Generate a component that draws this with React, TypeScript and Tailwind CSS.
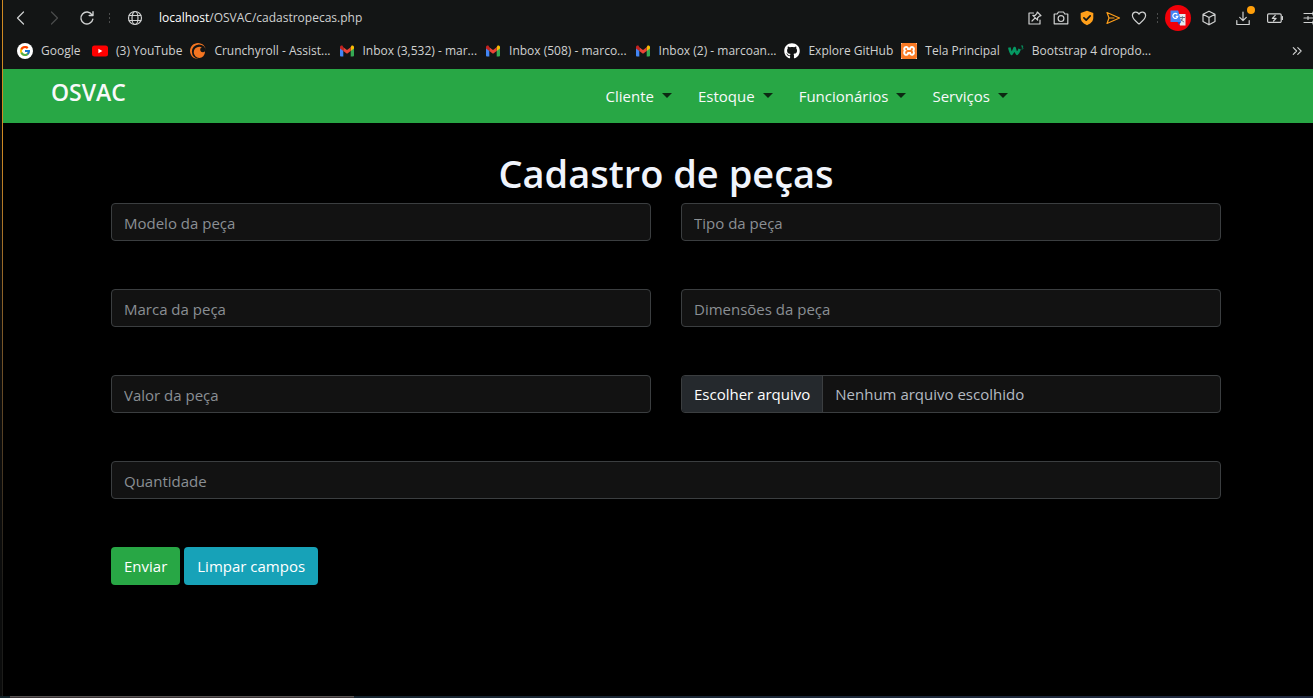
import type { ReactNode } from "react";
import { FcGoogle } from "react-icons/fc";
import { FaGithub } from "react-icons/fa";
import { SiCrunchyroll, SiXampp } from "react-icons/si";

const stroke = {
  fill: "none",
  stroke: "currentColor",
  strokeWidth: 1.2,
  strokeLinecap: "round" as const,
  strokeLinejoin: "round" as const,
};

function Icon({ children, className = "size-4" }: { children: ReactNode; className?: string }) {
  return (
    <svg viewBox="0 0 16 16" className={className} aria-hidden="true" {...stroke}>
      {children}
    </svg>
  );
}

function Gmail() {
  return (
    <svg viewBox="0 0 16 16" className="size-4" aria-hidden="true">
      <path d="M1 4v8.600c0 .5.4.9.9.9H4.300V7z" fill="#4285f4" />
      <path d="M15 4v8.600c0 .5-.4.9-.9.9h-2.400V7z" fill="#34a853" />
      <path d="M11.700 4.200V8L15 5.500V4c0-1.400-1.600-2-2.600-1.300z" fill="#fbbc04" />
      <path d="M4.300 8V4.200L8 7l3.700-2.800V8L8 10.800z" fill="#ea4335" />
      <path d="M1 4v1.500L4.300 8V4.200l-.7-1.500C2.600 2 1 2.600 1 4z" fill="#c5221f" />
    </svg>
  );
}

function YouTube() {
  return (
    <svg viewBox="0 0 16 16" className="size-4" aria-hidden="true">
      <rect x="0" y="2.500" width="16" height="11" rx="2.500" fill="#f00" />
      <path d="M6.400 5.700v4.600L10.400 8z" fill="#fff" />
    </svg>
  );
}

function W3() {
  return (
    <svg viewBox="0 0 16 16" className="size-4" aria-hidden="true" fill="none" stroke="#059862" strokeLinejoin="round">
      <path d="M1.300 4.500c.6 2.800 1.300 5.200 2.300 6.300 1.300-1.300 2.300-3.600 3-5.800.6 2.700 1.300 4.800 2.400 5.800 1.200-1.200 2-2.800 2.700-4.800" strokeWidth="2.600" />
      <path d="M13 3h2l-1 1.300c1.500 0 1.400 2-.4 1.800" strokeWidth="0.900" />
    </svg>
  );
}

const bookmarks: { label: string; icon: ReactNode }[] = [
  {
    label: "Google",
    icon: (
      <span className="flex size-4 items-center justify-center rounded-full bg-white">
        <FcGoogle className="size-3" />
      </span>
    ),
  },
  { label: "(3) YouTube", icon: <YouTube /> },
  { label: "Crunchyroll - Assist...", icon: <SiCrunchyroll className="size-4 text-[#f47521]" /> },
  { label: "Inbox (3,532) - mar...", icon: <Gmail /> },
  { label: "Inbox (508) - marco...", icon: <Gmail /> },
  { label: "Inbox (2) - marcoan...", icon: <Gmail /> },
  { label: "Explore GitHub", icon: <FaGithub className="size-4 text-white" /> },
  {
    label: "Tela Principal",
    icon: (
      <span className="flex size-4 items-center justify-center bg-white">
        <SiXampp className="size-4 text-[#fb7a24]" />
      </span>
    ),
  },
  { label: "Bootstrap 4 dropdo...", icon: <W3 /> },
];

function ToolButton({ label, className = "", children }: { label: string; className?: string; children: ReactNode }) {
  return (
    <button type="button" aria-label={label} className={`flex shrink-0 items-center justify-center ${className}`}>
      {children}
    </button>
  );
}

function Dots() {
  return (
    <svg viewBox="0 0 2 12" className="h-3 w-0.5 shrink-0" fill="#4b4c4c" aria-hidden="true">
      <rect y="1" width="1" height="2" />
      <rect y="5" width="1" height="2" />
      <rect y="9" width="1" height="2" />
    </svg>
  );
}

function BrowserBar() {
  return (
    <header className="bg-[#131515] text-[#d0d1d1]">
      <div className="flex h-9 items-center justify-between overflow-hidden pl-2.5">
        <div className="flex items-center">
          <div className="flex items-center gap-[17px]">
            <ToolButton label="Voltar">
              <Icon><path d="M10.500 2L4.500 8l6 6" /></Icon>
            </ToolButton>
            <ToolButton label="Avançar" className="text-[#4b4c4c]">
              <Icon><path d="M5.500 2l6 6-6 6" /></Icon>
            </ToolButton>
            <ToolButton label="Recarregar">
              <Icon>
                <path d="M13.800 9.300A6 6 0 1 1 13 4.800M14 1.800v3.700h-3.800" strokeWidth="1.400" />
              </Icon>
            </ToolButton>
          </div>
          <div className="flex items-center gap-4 pl-3.5">
            <Dots />
            <ToolButton label="Informações do site">
              <Icon>
                <circle cx="8" cy="8" r="6.500" />
                <ellipse cx="8" cy="8" rx="3" ry="6.500" />
                <path d="M2.200 5.500h11.600M2.200 10.500h11.600" />
              </Icon>
            </ToolButton>
            <span className="text-xs">
              <span className="text-white">localhost</span>/OSVAC/cadastropecas.php
            </span>
          </div>
        </div>
        <div className="flex shrink-0 items-center">
          <div className="flex items-center gap-2.5">
            <ToolButton label="Fixar">
              <Icon>
                <path d="M6.500 3H2v11h11V10" />
                <path d="M10.300 2l3.700 3.700-1.700.5-1.800 1.800.1 2.200-4.800-4.800 2.200.1 1.800-1.800zM8.200 7.800L5 11" />
              </Icon>
            </ToolButton>
            <ToolButton label="Captura de tela">
              <Icon>
                <path d="M1.200 4h3l1.300-2h5l1.300 2h3v9.800H1.200z" />
                <circle cx="8" cy="8.600" r="2.900" />
              </Icon>
            </ToolButton>
            <ToolButton label="Proteção">
              <Icon>
                <path d="M8 .8l6.300 2.200v4.800c0 3.800-3 6-6.300 7.400C4.700 13.800 1.700 11.600 1.700 7.800V3z" fill="#ff9f1a" stroke="none" />
                <path d="M4.900 7.800l2.300 2.300 4-4.300" stroke="#131515" strokeWidth="1.700" />
              </Icon>
            </ToolButton>
            <ToolButton label="Meu fluxo" className="text-[#ff9f1a]">
              <Icon>
                <path d="M2 2.500L14.500 8 2 13.500 4 8zM4 8h5" />
              </Icon>
            </ToolButton>
            <ToolButton label="Favoritar">
              <Icon>
                <path d="M8 14C5 11.500 1.400 9 1.400 5.500c0-3.800 5-4.700 6.600-1.300 1.600-3.400 6.600-2.500 6.600 1.300C14.600 9 11 11.500 8 14z" />
              </Icon>
            </ToolButton>
            <Dots />
          </div>
          <ToolButton label="Tradutor" className="ml-1.5 size-6.5 rounded-full bg-[#f00008]">
            <svg viewBox="0 0 16 16" className="size-4" aria-hidden="true">
              <path d="M6 4h9.500v11.500H10z" fill="#e8eaed" />
              <path d="M10 7.500h5M12.400 6.300v1.200c0 2-1 3.500-2.200 4.300M10.800 9c.8 1.600 2 2.400 3.300 3" fill="none" stroke="#5f7080" />
              <path d="M.5.500h7.700l3 11.500H.5z" fill="#4285f4" />
              <path d="M7.300 4.300A2.500 2.500 0 1 0 7.800 6.400H5.700" fill="none" stroke="#fff" strokeWidth="1.200" />
              <path d="M7.500 12H11l-2 3z" fill="#1a56c4" />
            </svg>
          </ToolButton>
          <ToolButton label="Extensões" className="ml-2.5">
            <Icon>
              <path d="M8 1.200l6 3.100v7.200l-6 3.300-6-3.300V4.300zM2 4.300l6 3.200 6-3.200M8 7.500v7.300" />
            </Icon>
          </ToolButton>
          <ToolButton label="Downloads" className="relative ml-4.5">
            <Icon>
              <path d="M8 2v8.500M4.700 7.400L8 10.700l3.300-3.300M1.800 10.500v4h12.400v-4" />
            </Icon>
            <span className="absolute -right-1 -top-1 size-2 rounded-full bg-[#ff9f0a]" />
          </ToolButton>
          <ToolButton label="Economia de bateria" className="ml-4">
            <Icon>
              <path d="M1.700 3.800h11.300a1.200 1.200 0 0 1 1.200 1.200v6.200a1.200 1.200 0 0 1-1.200 1.200H1.700A1.200 1.200 0 0 1 .6 11.200V5a1.200 1.200 0 0 1 1.100-1.200zM15.500 6.500v3" />
              <path d="M8.200 5.300L5.300 8.400h3.800L6.500 11" />
            </Icon>
          </ToolButton>
          <ToolButton label="Configuração" className="-mr-1.5 ml-5">
            <Icon>
              <path d="M1 3.500h14M1 8h14M1 12.500h14M10 2v3M5 6.500v3M10 11v3" />
            </Icon>
          </ToolButton>
        </div>
      </div>
      <nav aria-label="Favoritos" className="flex h-[33px] items-center pb-1 pl-3.5 pr-2.5">
        <ul className="flex min-w-0 flex-1 items-center gap-2 overflow-hidden">
          {bookmarks.map((b) => (
            <li key={b.label} className="min-w-[67px] shrink-0">
              <a href="#" className="flex items-center gap-2 text-xs whitespace-nowrap">
                {b.icon}
                {b.label}
              </a>
            </li>
          ))}
        </ul>
        <ToolButton label="Mais favoritos">
          <Icon className="size-3">
            <path d="M3 3.500L7.500 8 3 12.500M9 3.500L13.500 8 9 12.500" strokeWidth="1.500" />
          </Icon>
        </ToolButton>
      </nav>
    </header>
  );
}

const menus = ["Cliente", "Estoque", "Funcionários", "Serviços"];

function Navbar() {
  return (
    <nav aria-label="Principal" className="flex h-[54px] bg-[#28a745] text-[#f8f9fa]">
      <div className="w-[46%] shrink-0 pl-12 pt-[7px]">
        <a href="#" className="text-[23px] leading-8 font-semibold">
          OSVAC
        </a>
      </div>
      <ul className="flex items-center gap-6.5">
        {menus.map((m) => (
          <li key={m}>
            <button type="button" className="flex items-center gap-2 text-[15px]">
              {m}
              <svg viewBox="0 0 10 5" className="mb-0.5 h-[5px] w-2.5 fill-[#0c2912]" aria-hidden="true">
                <path d="M0 0h10L5 5z" />
              </svg>
            </button>
          </li>
        ))}
      </ul>
    </nav>
  );
}

function Field({ label, name, wide = false }: { label: string; name: string; wide?: boolean }) {
  return (
    <input
      type="text"
      name={name}
      aria-label={label}
      placeholder={label}
      className={`h-[38px] w-full rounded border border-[#3b3e40] bg-[#121212] px-3 pt-0.5 text-[15px] text-gray-200 placeholder:text-[#8a8f94] ${wide ? "col-span-2" : ""}`}
    />
  );
}

export default function App() {
  return (
    <div className="flex min-h-screen flex-col bg-black font-['Open_Sans','Noto_Sans',sans-serif]">
      <div className="flex flex-1">
        <div className="flex w-[3px] shrink-0 justify-end bg-[#0b0c0c]">
          <div className="w-px bg-linear-to-b from-[#d08a22] from-20% to-[#1c1c1a] to-85%" />
        </div>
        <div className="min-w-0 flex-1">
          <BrowserBar />
          <Navbar />
          <main className="pl-4">
            <div className="mx-auto max-w-[1110px] pt-[26px]">
              <h1 className="pb-1.5 text-center text-[38px] leading-12 font-semibold text-[#f0f4fc]">Cadastro de peças</h1>
              <form>
                <div className="grid grid-cols-2 gap-x-[30px] gap-y-12">
                  <Field label="Modelo da peça" name="modelo" />
                  <Field label="Tipo da peça" name="tipo" />
                  <Field label="Marca da peça" name="marca" />
                  <Field label="Dimensões da peça" name="dimensoes" />
                  <Field label="Valor da peça" name="valor" />
                  <label className="flex h-[38px] cursor-pointer items-stretch overflow-hidden rounded border border-[#3b3e40] bg-[#121212] text-[15px] text-[#b4bac2]">
                    <input type="file" name="arquivo" className="sr-only" />
                    <span className="flex items-center border-r border-[#3b3e40] bg-[#25292d] px-3 text-white">
                      Escolher arquivo
                    </span>
                    <span className="flex items-center px-3">Nenhum arquivo escolhido</span>
                  </label>
                  <Field label="Quantidade" name="quantidade" wide />
                </div>
                <div className="mt-12 flex gap-1 text-[15px] text-white">
                  <button type="submit" className="h-[38px] rounded bg-[#28a745] px-[13px]">Enviar</button>
                  <button type="reset" className="h-[38px] rounded bg-[#17a2b8] px-[13px]">Limpar campos</button>
                </div>
              </form>
            </div>
          </main>
        </div>
      </div>
      <div className="h-0.5 bg-linear-to-r from-[#14242b] to-[#1f2940] pl-2.5">
        <div className="h-full w-[344px] border-t border-[#5a5656] bg-[#3a3436]" />
      </div>
    </div>
  );
}
